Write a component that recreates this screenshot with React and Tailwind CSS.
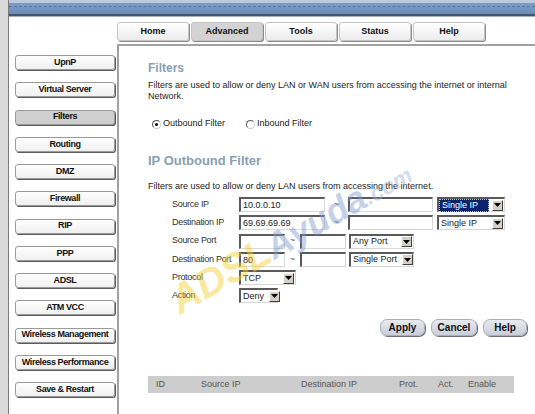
import React from "react";

const tabs = ["Home", "Advanced", "Tools", "Status", "Help"];
const sideItems = [
  "UpnP",
  "Virtual Server",
  "Filters",
  "Routing",
  "DMZ",
  "Firewall",
  "RIP",
  "PPP",
  "ADSL",
  "ATM VCC",
  "Wireless Management",
  "Wireless Performance",
  "Save & Restart",
];

// sunken text box, classic windows look
const Field = ({ w, value }) => (
  <div
    className={`${w} h-[15px] bg-white border-t-2 border-l-2 border-b border-r border-t-[#5a5a5a] border-l-[#5a5a5a] border-b-[#d8d8d8] border-r-[#d8d8d8] text-[9px] leading-[12px] pl-[2px] text-[#222] overflow-hidden whitespace-nowrap`}
  >
    {value}
  </div>
);

const Arrow = () => (
  <div className="w-[11px] h-[11px] bg-[#d4d0c8] border border-t-white border-l-white border-b-[#404040] border-r-[#404040] flex items-center justify-center shrink-0">
    <svg width="7" height="4" viewBox="0 0 7 4">
      <path d="M0 0h7L3.5 4z" fill="#000" />
    </svg>
  </div>
);

const Select = ({ w, value, active }) => (
  <div
    className={`${w} h-[15px] bg-white border-t-2 border-l-2 border-b border-r border-t-[#5a5a5a] border-l-[#5a5a5a] border-b-[#d8d8d8] border-r-[#d8d8d8] flex items-center justify-between pr-[1px]`}
  >
    <span
      className={`text-[9px] leading-[11px] px-[2px] mr-[3px] flex-1 whitespace-nowrap ${
        active ? "bg-[#0a246a] text-white border border-dotted border-[#c0c0ff]" : "text-[#222]"
      }`}
    >
      {value}
    </span>
    <Arrow />
  </div>
);

const Row = ({ label, children }) => (
  <div className="flex items-center h-[15px]">
    <div className="w-[67px] text-[9px] tracking-[-0.3px] text-[#333] whitespace-nowrap">{label}</div>
    {children}
  </div>
);

const Tilde = ({ w }) => (
  <div className={`${w} text-center text-[9px] text-[#555]`}>~</div>
);

const Radio = ({ on }) => (
  <div className="w-[9px] h-[9px] rounded-full bg-white border border-t-[#555] border-l-[#555] border-b-[#ccc] border-r-[#ccc] flex items-center justify-center">
    {on && <div className="w-[3px] h-[3px] rounded-full bg-black" />}
  </div>
);

const PillButton = ({ label, w }) => (
  <div
    className={`${w} h-[17px] rounded-[7px] bg-gradient-to-b from-[#e8ebf0] to-[#c9ced8] border border-[#a9aeb8] shadow-[1px_1px_0_#6b6f78] flex items-center justify-center text-[10px] font-bold text-[#111]`}
  >
    {label}
  </div>
);

export default function App() {
  return (
    <div className="w-[535px] h-[414px] overflow-hidden bg-white flex relative font-['Liberation_Sans',Arial,sans-serif]">
      {/* left grey strip */}
      <div className="w-[9px] shrink-0 bg-[#dadada] border-r border-[#7a7a7a]" />

      <div className="flex-1 flex flex-col">
        {/* top banner */}
        <div className="h-[17px] shrink-0 flex flex-col">
          <div className="h-[3px] bg-[#bccadb]" />
          <div className="h-[1px] bg-[#8099b8]" />
          <div className="h-[2px] bg-[#7a9bc6]" />
          <div className="h-[1px] border-t border-dashed border-[#56759c] bg-[#7a9bc6]" />
          <div className="h-[7px] bg-gradient-to-b from-[#7898c3] to-[#6a8bb6]" />
          <div className="h-[2px] bg-[#46566a]" />
          <div className="h-[1px] bg-[#a7b1bb]" />
        </div>

        <div className="flex flex-1">
          {/* sidebar */}
          <div className="w-[108px] shrink-0 pl-[6px] pt-[38px] flex flex-col gap-[12.25px]">
            {sideItems.map((s) => (
              <div
                key={s}
                className={`w-[100px] h-[15px] rounded-[3px] border border-[#9a9a9a] shadow-[1px_1px_0_#5c5c5c] flex items-center justify-center text-[9px] font-bold tracking-[-0.4px] text-[#111] whitespace-nowrap ${
                  s === "Filters" ? "bg-[#cfcfcf]" : "bg-gradient-to-b from-white to-[#f0f0f0]"
                }`}
              >
                {s}
              </div>
            ))}
          </div>

          {/* main */}
          <div className="flex-1 flex flex-col">
            <div className="flex gap-[2px] mt-[5px] h-[19px]">
              {tabs.map((t) => (
                <div
                  key={t}
                  className={`w-[72px] h-[19px] rounded-[3px] border border-[#c4c4c4] shadow-[1px_1px_0_#8c8c8c] flex items-center justify-center text-[9px] font-bold text-[#111] ${
                    t === "Advanced" ? "bg-[#d3d3d3]" : "bg-gradient-to-b from-white to-[#ececec]"
                  }`}
                >
                  {t}
                </div>
              ))}
            </div>

            <div className="mt-[3px] flex-1 border-l-2 border-t-2 border-[#a2a2a2] pl-[29px] pt-[15px] pr-[8px]">
              <div className="text-[12px] leading-[14px] font-bold text-[#8a9fb2]">Filters</div>
              <div className="mt-[5px] text-[9px] leading-[11px] text-[#222]">
                Filters are used to allow or deny LAN or WAN users from accessing the internet or internal
                <br />
                Network.
              </div>

              <div className="mt-[16px] h-[12px] flex items-center text-[9px] text-[#222] pl-[4px]">
                <Radio on />
                <span className="ml-[2px] w-[83px]">Outbound Filter</span>
                <Radio />
                <span className="ml-[2px]">Inbound Filter</span>
              </div>

              <div className="mt-[23px] text-[13px] leading-[15px] font-bold text-[#8a9fb2]">
                IP Outbound Filter
              </div>
              <div className="mt-[13px] text-[9px] leading-[11px] text-[#222]">
                Filters are used to allow or deny LAN users from accessing the internet.
              </div>

              <div className="mt-[5px] pl-[24px] flex flex-col gap-[3.3px]">
                <Row label="Source IP">
                  <Field w="w-[86px]" value="10.0.0.10" />
                  <Tilde w="w-[23px]" />
                  <Field w="w-[85px]" value="" />
                  <div className="w-[4px]" />
                  <Select w="w-[68px]" value="Single IP" active />
                </Row>
                <Row label="Destination IP">
                  <Field w="w-[86px]" value="69.69.69.69" />
                  <Tilde w="w-[23px]" />
                  <Field w="w-[85px]" value="" />
                  <div className="w-[4px]" />
                  <Select w="w-[68px]" value="Single IP" />
                </Row>
                <Row label="Source Port">
                  <Field w="w-[46px]" value="" />
                  <Tilde w="w-[15px]" />
                  <Field w="w-[46px]" value="" />
                  <div className="w-[3px]" />
                  <Select w="w-[65px]" value="Any Port" />
                </Row>
                <Row label="Destination Port">
                  <Field w="w-[46px]" value="80" />
                  <Tilde w="w-[15px]" />
                  <Field w="w-[46px]" value="" />
                  <div className="w-[3px]" />
                  <Select w="w-[65px]" value="Single Port" />
                </Row>
                <Row label="Protocol">
                  <Select w="w-[57px]" value="TCP" />
                </Row>
                <Row label="Action">
                  <Select w="w-[39px]" value="Deny" />
                </Row>
              </div>

              <div className="mt-[16px] flex justify-end gap-[6px]">
                <PillButton label="Apply" w="w-[45px]" />
                <PillButton label="Cancel" w="w-[46px]" />
                <PillButton label="Help" w="w-[44px]" />
              </div>

              <div className="mt-[40px] w-[366px] h-[17px] bg-[#cdcdcd] grid grid-cols-[45px_100px_98px_39px_30px_1fr] items-center pl-[8px] text-[9px] text-[#555]">
                <span>ID</span>
                <span>Source IP</span>
                <span>Destination IP</span>
                <span>Prot.</span>
                <span>Act.</span>
                <span>Enable</span>
              </div>
            </div>
          </div>
        </div>
      </div>

      {/* site watermark */}
      <div className="absolute left-[90px] top-[205px] w-[400px] text-center -rotate-[30deg] pointer-events-none whitespace-nowrap italic font-bold opacity-45">
        <span className="text-[40px] text-[#f2cf2a]">ADSL</span>
        <span className="text-[36px] text-[#7d9bd0]">Ayuda</span>
        <span className="text-[22px] text-[#9fb3d6]">.com</span>
      </div>
    </div>
  );
}
